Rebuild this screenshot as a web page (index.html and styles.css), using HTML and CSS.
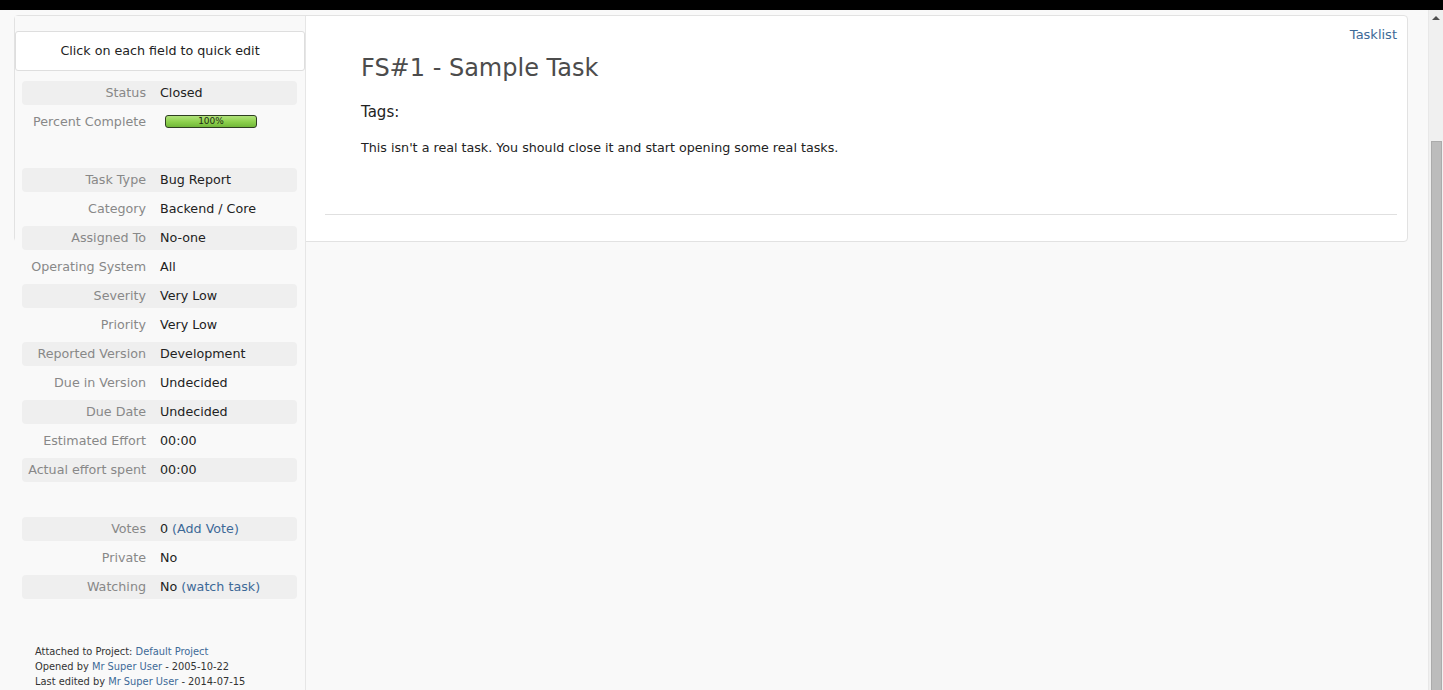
FILE: index.html
```html
<!DOCTYPE html>
<html>
<head>
<meta charset="utf-8">
<title>FS#1 : Sample Task</title>
<link rel="stylesheet" href="styles.css">
</head>
<body>
<div class="topbar"></div>
<div class="viewport">
  <div class="page">
    <div class="task">
      <aside class="sidebar">
        <div class="quickedit">Click on each field to quick edit</div>
        <div class="group">
          <div class="row"><span class="label">Status</span><span class="value">Closed</span></div>
          <div class="row"><span class="label">Percent Complete</span><span class="value"><span class="progress"><span class="progress-text">100%</span></span></span></div>
        </div>
        <div class="group">
          <div class="row"><span class="label">Task Type</span><span class="value">Bug Report</span></div>
          <div class="row"><span class="label">Category</span><span class="value">Backend / Core</span></div>
          <div class="row"><span class="label">Assigned To</span><span class="value">No-one</span></div>
          <div class="row"><span class="label">Operating System</span><span class="value">All</span></div>
          <div class="row"><span class="label">Severity</span><span class="value">Very Low</span></div>
          <div class="row"><span class="label">Priority</span><span class="value">Very Low</span></div>
          <div class="row"><span class="label">Reported Version</span><span class="value">Development</span></div>
          <div class="row"><span class="label">Due in Version</span><span class="value">Undecided</span></div>
          <div class="row"><span class="label">Due Date</span><span class="value">Undecided</span></div>
          <div class="row"><span class="label">Estimated Effort</span><span class="value">00:00</span></div>
          <div class="row"><span class="label">Actual effort spent</span><span class="value">00:00</span></div>
        </div>
        <div class="group group-last">
          <div class="row"><span class="label">Votes</span><span class="value">0 <a class="link" href="#">(Add Vote)</a></span></div>
          <div class="row"><span class="label">Private</span><span class="value">No</span></div>
          <div class="row"><span class="label">Watching</span><span class="value">No <a class="link" href="#">(watch task)</a></span></div>
        </div>
        <div class="footer">
          <div>Attached to Project: <a class="link" href="#">Default Project</a></div>
          <div>Opened by <a class="link" href="#">Mr Super User</a> - 2005-10-22</div>
          <div>Last edited by <a class="link" href="#">Mr Super User</a> - 2014-07-15</div>
        </div>
      </aside>
      <section class="details">
        <div class="nav"><a class="link" href="#">Tasklist</a></div>
        <div class="content">
          <h2 class="title">FS#1 - Sample Task</h2>
          <div class="tags">Tags:</div>
          <p class="desc">This isn't a real task. You should close it and start opening some real tasks.</p>
        </div>
        <hr class="sep">
      </section>
    </div>
  </div>
  <div class="scrollbar">
    <div class="arrow"></div>
    <div class="track"><div class="thumb"></div></div>
  </div>
</div>
</body>
</html>
```

FILE: styles.css
```css
html, body {
  height: 100%;
}
body {
  margin: 0;
  overflow: hidden;
  background: #f9f9f9;
  font-family: "DejaVu Sans", Verdana, sans-serif;
  font-size: 12.7px;
  color: #222;
}
.topbar {
  height: 10px;
  background: #000;
}
.viewport {
  display: flex;
  height: 680px;
  overflow: hidden;
}
.page {
  flex: 1;
  min-width: 0;
  padding: 5px 20px 0 14px;
  overflow: hidden;
}
.task {
  background: #fff;
  border: 1px solid #e2e2e2;
  border-radius: 4px;
}
.sidebar {
  float: left;
  width: 290px;
  padding: 15px 0 80px 0;
  background: #f9f9f9;
  border-right: 1px solid #e6e6e6;
}
.quickedit {
  height: 38px;
  line-height: 38px;
  text-align: center;
  background: #fff;
  border: 1px solid #dedede;
  border-radius: 3px;
  color: #222;
}
.group {
  margin: 10px 8px 0 7px;
  display: flex;
  flex-direction: column;
  gap: 5px;
}
.group + .group {
  margin-top: 34px;
}
.group.group-last {
  margin-top: 35px;
}
.row {
  display: grid;
  grid-template-columns: 130px 1fr;
  height: 24px;
  line-height: 24px;
  border-radius: 4px;
}
.row:nth-child(odd) {
  background: #efefef;
}
.label {
  text-align: right;
  padding-right: 6px;
  color: #888;
  white-space: nowrap;
}
.value {
  padding-left: 8px;
  color: #222;
  white-space: nowrap;
}
.link {
  color: #3d6997;
  text-decoration: none;
}
.progress {
  display: inline-flex;
  align-items: center;
  justify-content: center;
  width: 90px;
  height: 11px;
  margin-left: 5px;
  vertical-align: middle;
  margin-top: -3px;
  border: 1px solid #2f3f22;
  border-radius: 3px;
  background: linear-gradient(#b0e27a, #8cd04c 55%, #72b83a);
}
.progress-text {
  font-size: 9px;
  line-height: 11px;
  color: #1e2a14;
}
.footer {
  margin: 45px 0 0 20px;
  font-size: 9.85px;
  line-height: 15px;
  color: #333;
}
.details {
  margin-left: 291px;
  padding: 10px 10px 26px 19px;
}
.nav {
  text-align: right;
  line-height: 18px;
  font-size: 13px;
}
.content {
  padding-left: 36px;
}
.title {
  margin: 9px 0 0 0;
  font-size: 24px;
  line-height: 30px;
  font-weight: normal;
  color: #4c4c4c;
}
.tags {
  margin-top: 19px;
  font-size: 15px;
  line-height: 20px;
}
.desc {
  margin: 17px 0 0 0;
  line-height: 18px;
}
.sep {
  margin: 57px 0 0 0;
  border: 0;
  border-top: 1px solid #e0e0e0;
}
.scrollbar {
  width: 15px;
  flex: none;
  display: flex;
  flex-direction: column;
  background: #f0f0f0;
  border-left: 1px solid #e8e8e8;
  box-sizing: border-box;
}
.arrow {
  height: 16px;
  position: relative;
}
.arrow::before {
  content: "";
  position: absolute;
  left: 3px;
  top: 6px;
  border-left: 4px solid transparent;
  border-right: 4px solid transparent;
  border-bottom: 4px solid #505050;
}
.track {
  flex: 1;
  padding-top: 115px;
  display: flex;
}
.thumb {
  flex: 1;
  margin: 0 1px 0 2px;
  background: #bcbcbc;
  border: 1px solid #ababab;
  border-bottom: 0;
}
```
